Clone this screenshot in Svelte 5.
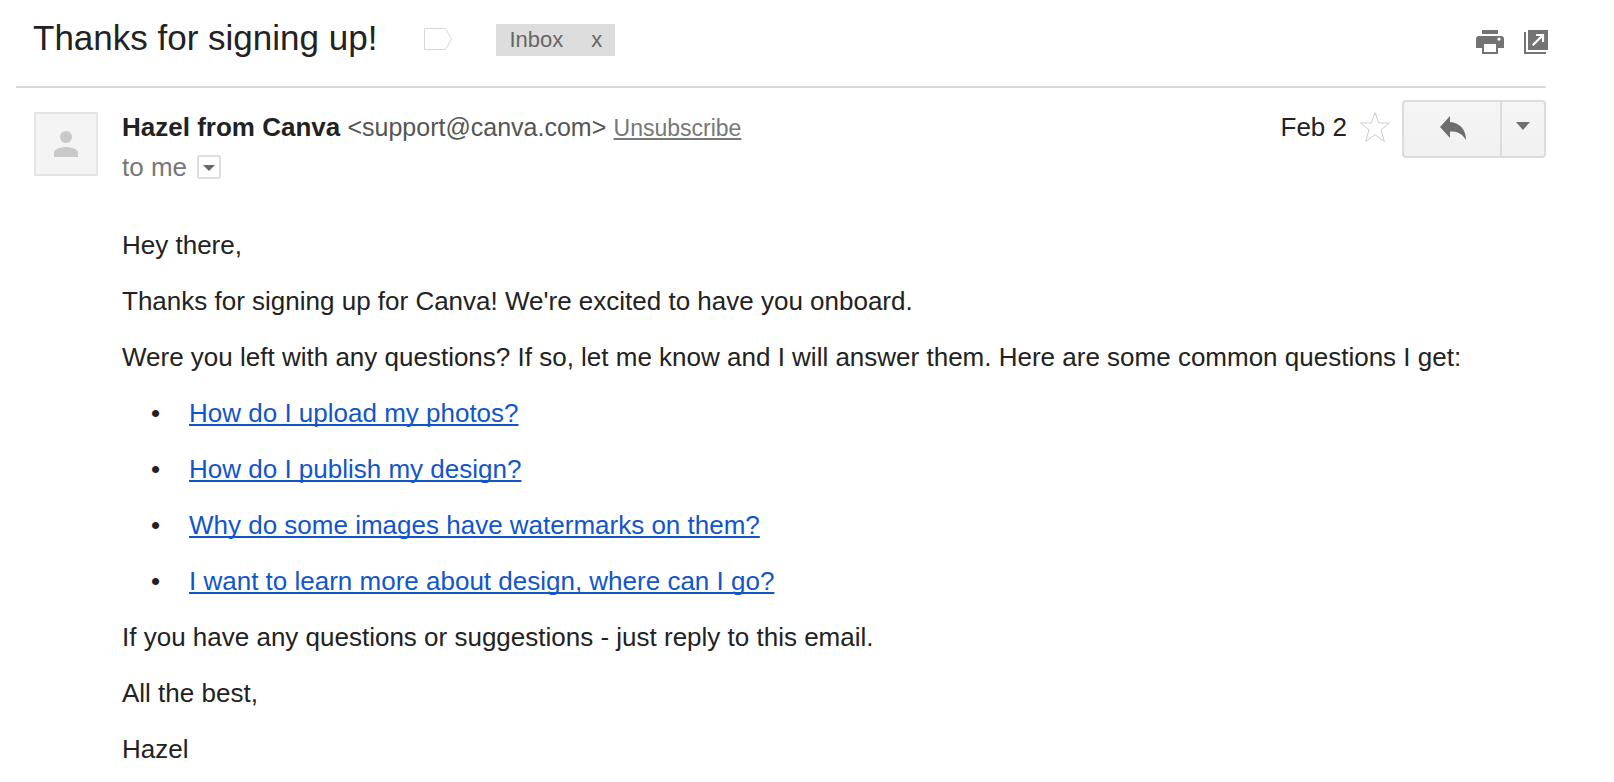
<script lang="ts">
	type Question = {
		title: string;
		href: string;
	};

	const questions: Question[] = [
		{ title: 'How do I upload my photos?', href: '#upload' },
		{ title: 'How do I publish my design?', href: '#publish' },
		{ title: 'Why do some images have watermarks on them?', href: '#watermarks' },
		{ title: 'I want to learn more about design, where can I go?', href: '#learn' }
	];

	let inInbox = $state(true);
	let starred = $state(false);
</script>

<main class="mail">
	<header class="subject-bar">
		<h1>Thanks for signing up!</h1>
		<button class="plain tag" type="button" aria-label="Mark as important">
			<svg width="28" height="22" viewBox="0 0 28 22">
				<path d="M.5.5H21.5L27.5 11L21.5 21.5H.5Z" fill="#fff" stroke="#d8d8d8" />
			</svg>
		</button>
		{#if inInbox}
			<div class="label">
				<span>Inbox</span>
				<button class="plain" type="button" aria-label="Remove label Inbox" onclick={() => (inInbox = false)}>x</button>
			</div>
		{/if}
		<div class="tools">
			<button class="plain" type="button" aria-label="Print all">
				<svg width="28" height="24" viewBox="0 0 28 24" fill="#737373">
					<path d="M6 0H22V4H6Z" />
					<path
						fill-rule="evenodd"
						d="M3 6H25Q28 6 28 9V18H22V24H6V18H0V9Q0 6 3 6ZM8 14V22H20V14ZM23 7.5A1.6 1.6 0 1 0 23 10.7A1.6 1.6 0 1 0 23 7.5Z"
					/>
				</svg>
			</button>
			<button class="plain" type="button" aria-label="In new window">
				<svg width="24" height="24" viewBox="0 0 24 24">
					<path d="M0 2H2V22H22V24H0Z" fill="#737373" />
					<path d="M4 0H24V20H4Z" fill="#737373" />
					<path d="M12 5H19V12M19 5L8.700 15.300" fill="none" stroke="#fff" stroke-width="2.200" />
				</svg>
			</button>
		</div>
	</header>

	<article class="message">
		<div class="avatar">
			<svg width="24" height="26" viewBox="0 0 24 26" fill="#c9c9c9">
				<circle cx="12" cy="6" r="6" />
				<path d="M0 26V22C0 18 7 16 12 16S24 18 24 22V26Z" />
			</svg>
		</div>

		<div class="content">
			<div class="meta">
				<div class="people">
					<p class="from">
						<strong>Hazel from Canva</strong>
						<span class="address">&lt;support@canva.com&gt;</span>
						<a class="unsubscribe" href="#unsubscribe">Unsubscribe</a>
					</p>
					<p class="to">
						to me
						<button class="plain" type="button" aria-label="Show details">
							<svg width="24" height="24" viewBox="0 0 24 24">
								<rect x="1" y="1" width="22" height="22" rx="2" fill="#fff" stroke="#dedede" stroke-width="2" />
								<path d="M6 10H18L12 16Z" fill="#666" />
							</svg>
						</button>
					</p>
				</div>

				<time datetime="02-02">Feb 2</time>
				<button class="plain star" type="button" aria-label="Star" aria-pressed={starred} onclick={() => (starred = !starred)}>
					<svg width="32" height="32" viewBox="0 0 32 32">
						<path
							d="M16 1.5L19.7 12H30.5L22 18.8L25.3 30.5L16 23.7L6.7 30.5L10 18.8L1.5 12H12.3Z"
							fill={starred ? '#f7cb4d' : '#fff'}
							stroke="#ccc"
						/>
					</svg>
				</button>
				<div class="actions">
					<button class="reply" type="button" aria-label="Reply">
						<svg width="26" height="24" viewBox="0 0 26 24">
							<path d="M0 11L10 0V6C19 6.500 26 13 26 24C22 17 17 15.500 10 15.500V22Z" fill="#6e6e6e" />
						</svg>
					</button>
					<button class="more" type="button" aria-label="More">
						<svg width="14" height="8" viewBox="0 0 14 8">
							<path d="M0 0H14L7 8Z" fill="#6e6e6e" />
						</svg>
					</button>
				</div>
			</div>

			<div class="body">
				<p>Hey there,</p>
				<p>Thanks for signing up for Canva! We're excited to have you onboard.</p>
				<p>Were you left with any questions? If so, let me know and I will answer them. Here are some common questions I get:</p>
				<ul>
					{#each questions as question (question.href)}
						<li><a href={question.href}>{question.title}</a></li>
					{/each}
				</ul>
				<p>If you have any questions or suggestions - just reply to this email.</p>
				<p>All the best,</p>
				<p>Hazel</p>
			</div>
		</div>
	</article>
</main>

<style>
	:global(body) {
		margin: 0;
		background: #fff;
	}

	.mail {
		padding: 0 68px 24px 16px;
		font-family: 'Liberation Sans', Arial, sans-serif;
		font-size: 26px;
		line-height: 30px;
		color: #222;
	}

	h1,
	p,
	ul {
		margin: 0;
		padding: 0;
	}

	svg {
		display: block;
	}

	.plain {
		padding: 0;
		border: none;
		background: none;
		font: inherit;
		color: inherit;
		cursor: pointer;
	}

	a {
		color: #15c;
		text-decoration: underline;
		text-decoration-thickness: 2px;
		text-underline-offset: 2px;
		text-decoration-skip-ink: none;
	}

	.subject-bar {
		display: flex;
		align-items: center;
		box-sizing: border-box;
		height: 88px;
		padding: 0 0 6px 17px;
		border-bottom: 2px solid #d8d8d8;
	}

	h1 {
		padding-bottom: 4px;
		font-size: 35px;
		font-weight: 400;
		line-height: 40px;
	}

	.tag {
		margin: 0 44px 2px 47px;
	}

	.label {
		display: flex;
		gap: 28px;
		padding: 0 13px;
		background: #ddd;
		font-size: 22px;
		line-height: 32px;
		color: #666;
	}

	.tools {
		display: flex;
		gap: 20px;
		margin: 4px -2px 0 auto;
	}

	.message {
		display: flex;
		gap: 24px;
		padding: 12px 0 0 18px;
	}

	.avatar {
		display: flex;
		align-items: center;
		justify-content: center;
		flex: none;
		box-sizing: border-box;
		width: 64px;
		height: 64px;
		margin-top: 12px;
		border: 2px solid #e5e5e5;
		background: #f4f4f4;
	}

	.content {
		flex: 1;
		min-width: 0;
	}

	.meta {
		display: flex;
		align-items: flex-start;
	}

	.people {
		flex: 1;
		padding-top: 12px;
	}

	.from {
		color: #555;
	}

	.from strong {
		color: #222;
	}

	.address {
		font-size: 25px;
	}

	.unsubscribe {
		font-size: 23px;
		color: #777;
	}

	.to {
		display: flex;
		align-items: center;
		gap: 10px;
		margin-top: 9px;
		color: #777;
	}

	time {
		padding-top: 12px;
	}

	.star {
		margin: 11px 11px 0 12px;
	}

	.actions {
		display: flex;
		box-sizing: border-box;
		height: 58px;
		border: 2px solid #dcdcdc;
		border-radius: 4px;
		background: linear-gradient(#f5f5f5, #f1f1f1);
	}

	.actions button {
		display: flex;
		align-items: center;
		justify-content: center;
		border: none;
		background: none;
		cursor: pointer;
	}

	.actions .reply {
		width: 98px;
		padding: 0 0 2px 2px;
		border-right: 2px solid #dcdcdc;
	}

	.actions .more {
		width: 42px;
		padding: 0 0 6px;
	}

	.body {
		display: flex;
		flex-direction: column;
		gap: 26px;
		padding-top: 48px;
	}

	ul {
		display: flex;
		flex-direction: column;
		gap: 26px;
		padding-left: 29px;
		list-style: none;
	}

	li {
		display: flex;
	}

	li::before {
		content: '•';
		flex: none;
		width: 38px;
	}
</style>
